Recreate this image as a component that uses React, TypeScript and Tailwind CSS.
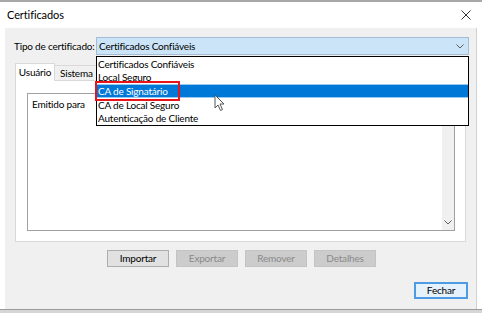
import React from "react";

const font = { fontFamily: "Lato, 'Liberation Sans', sans-serif" };

function Chevron({ className }: { className?: string }) {
  return (
    <svg width="8" height="5" viewBox="0 0 8 5" className={className}>
      <path d="M0.5 0.5 L4 4 L7.5 0.5" fill="none" stroke="#606060" strokeWidth="1" />
    </svg>
  );
}

function Btn({ label, disabled }: { label: string; disabled?: boolean }) {
  return (
    <div
      className={
        "w-[62px] h-[17px] flex items-center justify-center border " +
        (disabled
          ? "bg-[#cccccc] border-[#c4c4c4] text-[#8a8a8a]"
          : "bg-[#e1e1e1] border-[#adadad] text-black")
      }
    >
      {label}
    </div>
  );
}

export default function App() {
  const items = [
    "Certificados Confiáveis",
    "Local Seguro",
    "CA de Signatário",
    "CA de Local Seguro",
    "Autenticação de Cliente",
  ];
  return (
    <div
      className="relative w-[482px] h-[313px] bg-white overflow-hidden text-black text-[10px] tracking-[-0.2px] whitespace-nowrap"
      style={font}
    >
      {/* top line */}
      <div className="h-[2px] bg-[#a8a8a8] w-full" />
      {/* title bar */}
      <div className="h-[26px] flex items-center justify-between pl-[7px] pr-[11px] bg-white">
        <span className="text-[11px] tracking-[-0.1px] text-black">Certificados</span>
        <svg width="10" height="10" viewBox="0 0 10 10">
          <path d="M0.5 0.5 L9.5 9.5 M9.5 0.5 L0.5 9.5" stroke="#333" strokeWidth="1" />
        </svg>
      </div>
      {/* body */}
      <div className="ml-[5px] w-[472px] h-[281px] bg-[#f0f0f0] border-r border-[#d0d0d0] flex flex-col">
        {/* type row */}
        <div className="mt-[9px] ml-[9px] flex items-center h-[18px]">
          <div className="w-[82px]">Tipo de certificado:</div>
          <div className="w-[373px] h-[18px] bg-[#cce4f7] border border-[#a3bdd6] flex items-center justify-between pl-[2px] pr-[4px]">
            <span>Certificados Confiáveis</span>
            <Chevron />
          </div>
        </div>
        {/* tabs */}
        <div className="mt-[8px] ml-[10px] flex items-end h-[17px]">
          <div className="w-[40px] h-[18px] bg-white border border-b-0 border-[#d9d9d9] flex items-center justify-center relative z-10 -mb-px">
            Usuário
          </div>
          <div className="w-[44px] h-[15px] bg-[#f0f0f0] border border-l-0 border-b-0 border-[#d9d9d9] flex items-center pl-[5px]">
            Sistema
          </div>
        </div>
        {/* tab panel */}
        <div className="ml-[10px] w-[451px] h-[162px] bg-white border border-[#d9d9d9] pt-[12px] pl-[11px]">
          <div className="w-[428px] h-[138px] border border-[#a0a0a0] bg-white flex">
            <div className="flex-1 flex flex-col">
              <div className="h-[20px] flex items-center pl-[4px]">Emitido para</div>
            </div>
            <div className="w-[12px] h-full bg-[#f0f0f0] flex flex-col justify-end items-center pb-[5px]">
              <Chevron />
            </div>
          </div>
        </div>
        {/* buttons */}
        <div className="mt-[8px] ml-[102px] flex gap-[7px]">
          <Btn label="Importar" />
          <Btn label="Exportar" disabled />
          <Btn label="Remover" disabled />
          <Btn label="Detalhes" disabled />
        </div>
        <div className="mt-[15px] ml-[409px]">
          <div className="w-[54px] h-[17px] bg-[#e5f1fb] border-2 border-[#4c9be3] flex items-center justify-center">
            Fechar
          </div>
        </div>
      </div>
      {/* bottom edge */}
      <div className="h-px bg-[#9a9a9a] w-full" />
      <div className="h-[3px] bg-[#d6d6d6] w-full" />

      {/* dropdown list overlay */}
      <div className="absolute left-[96px] top-[56px] w-[373px] bg-white border border-black leading-none">
        {items.map((t, i) => (
          <div
            key={t}
            className={
              "h-[13.6px] flex items-center pl-[1px] " +
              (i === 2 ? "bg-[#0078d7] text-white border-y border-[#99c9ef]" : "")
            }
          >
            {t}
          </div>
        ))}
      </div>
      {/* red highlight */}
      <div className="absolute left-[95px] top-[81px] w-[85px] h-[20px] border-[2.5px] border-[#e8141c]" />
      {/* cursor */}
      <svg className="absolute left-[214px] top-[94px]" width="12" height="18" viewBox="0 0 12 18">
        <path d="M1 1 L1 14 L4 11 L6.5 16.5 L8.5 15.5 L6 10 L10 10 Z" fill="white" stroke="#555" strokeWidth="1" strokeLinejoin="round" />
      </svg>
    </div>
  );
}
